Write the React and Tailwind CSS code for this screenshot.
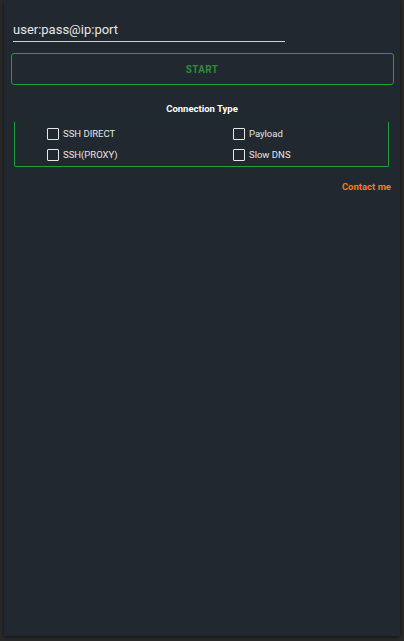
import React, { useState } from "react";

const OPTIONS = [
  ["SSH DIRECT", "Payload"],
  ["SSH(PROXY)", "Slow DNS"],
];

function Check({ label, checked, onToggle }) {
  return (
    <label className="flex items-center gap-[4px] h-[21px] cursor-pointer" onClick={onToggle}>
      <span className="w-[12px] h-[12px] border-[1.5px] border-[#e8e8e8] rounded-[1px] flex items-center justify-center">
        {checked && <span className="w-[6px] h-[6px] bg-[#e8e8e8]" />}
      </span>
      <span className="text-[9.5px] text-[#e6e6e6] leading-none">{label}</span>
    </label>
  );
}

export default function App() {
  const [selected, setSelected] = useState(null);

  return (
    <div className="w-[404px] h-[641px] bg-[#2a2a2a] px-[4px] pb-[5px] font-['Roboto',sans-serif]">
      <div className="h-full bg-[#22282f] shadow-[0_1px_4px_rgba(0,0,0,0.6)] pt-[21px] px-[6px]">
        <div className="pl-[3px]">
          <div className="w-[272px] border-b border-[#d0d0d0] pb-[3px] text-[13px] leading-[17px] text-[#e6e6e6]">
            user:pass@ip:port
          </div>
        </div>

        <button className="mt-[11px] w-[383px] h-[32px] ml-[0.5px] border border-[#17a535] rounded-[3px] text-[10px] font-bold text-[#2e8b3a] tracking-[0.3px]">
          START
        </button>

        <div className="mt-[19px] text-center text-[9.5px] font-bold text-white leading-none">
          Connection Type
        </div>

        <div className="mt-[7px] ml-[4px] w-[375px] h-[46px] border border-[#1fa23a] border-t-[#1d2e27] rounded-[2px] grid grid-cols-[186px_1fr] pl-[32px] pt-[2px]">
          {OPTIONS.flat().map((label) => (
            <Check
              key={label}
              label={label}
              checked={selected === label}
              onToggle={() => setSelected(selected === label ? null : label)}
            />
          ))}
        </div>

        <div className="mt-[15px] text-right pr-[3px] text-[9.5px] font-bold text-[#f47b20] leading-none">
          Contact me
        </div>
      </div>
    </div>
  );
}
